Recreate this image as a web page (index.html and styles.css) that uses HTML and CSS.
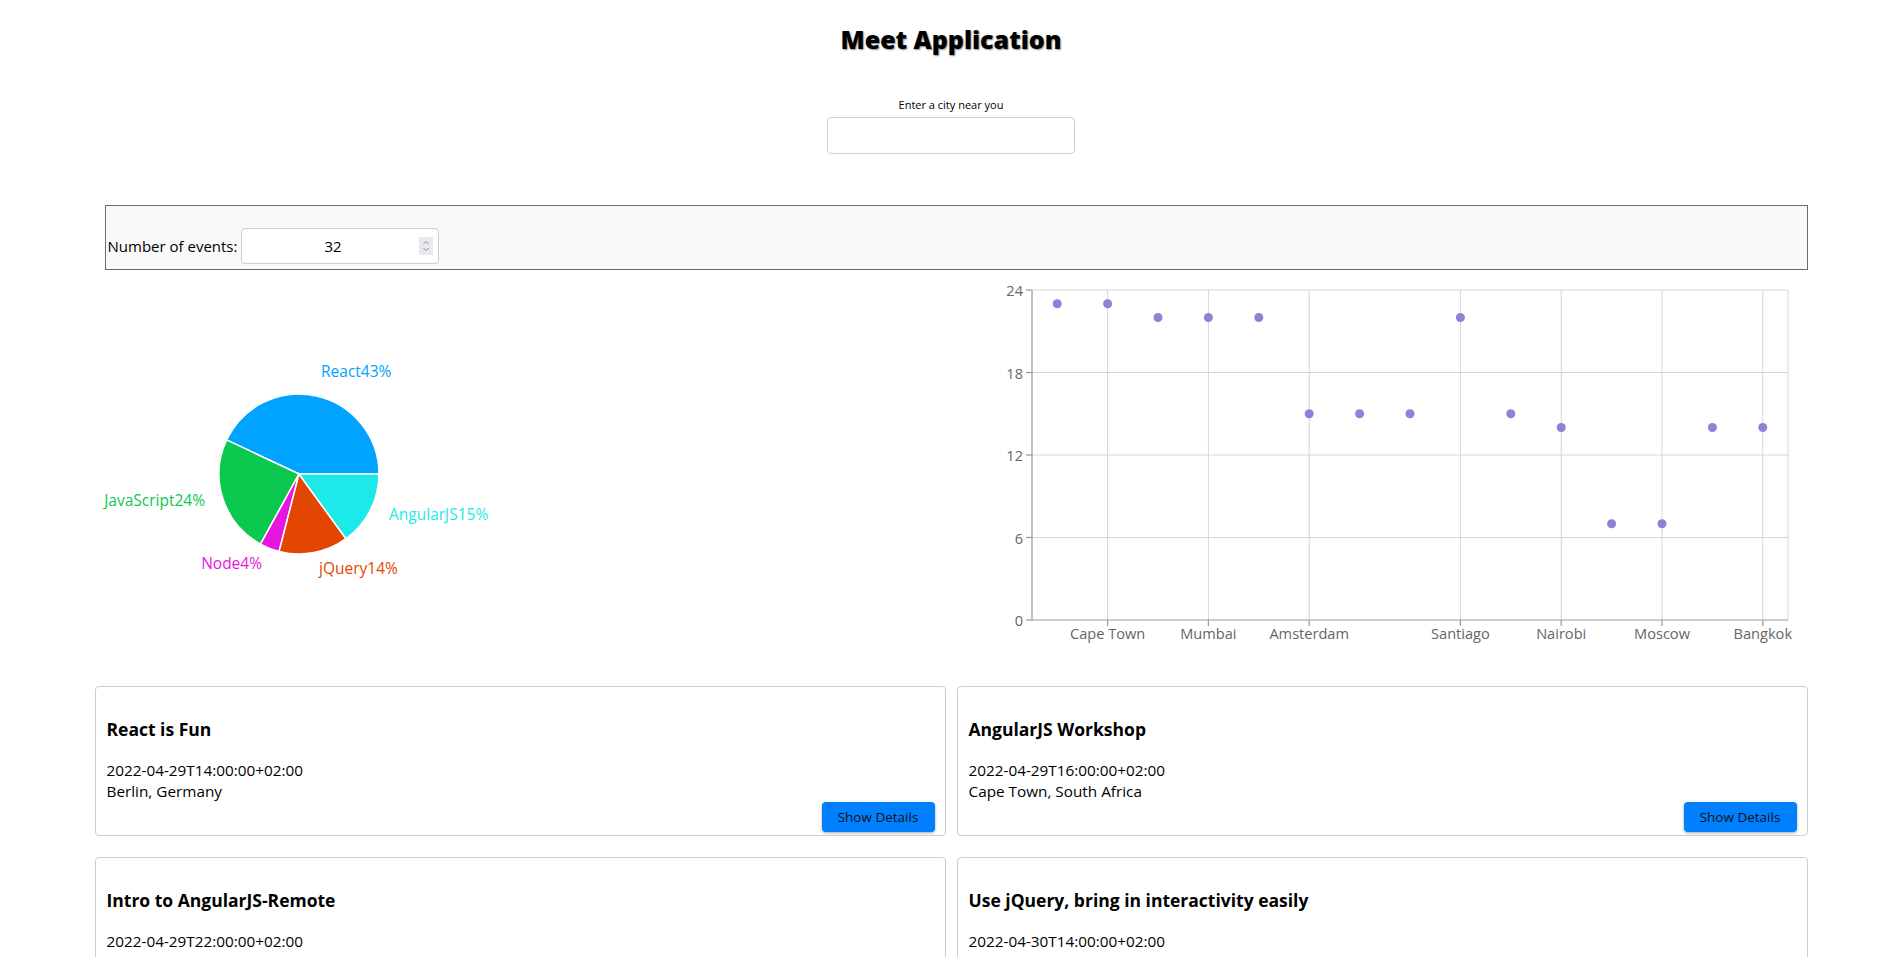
FILE: index.html
```html
<!DOCTYPE html>
<html lang="en">
<head>
<meta charset="utf-8">
<title>Meet App</title>
<link rel="stylesheet" href="styles.css">
</head>
<body>
<div class="app">
  <h1 class="title">Meet Application</h1>
  <div class="city-search">
    <label class="city-label" for="city">Enter a city near you</label>
    <input class="city-input" id="city" type="text">
  </div>
  <div class="container">
    <div class="events-bar">
      <label class="events-label" for="num">Number of events:</label>
      <div class="num-wrap">
        <input class="num-input" id="num" type="text" value="32">
        <span class="spinner">
          <svg width="14" height="18" viewBox="0 0 14 18">
            <rect x="0" y="0" width="14" height="18" fill="#e9e9ed"/>
            <path d="M4.5 7 L7 4.5 L9.5 7" fill="none" stroke="#8a8a8a" stroke-width="1"/>
            <path d="M4.5 11 L7 13.5 L9.5 11" fill="none" stroke="#8a8a8a" stroke-width="1"/>
          </svg>
        </span>
      </div>
    </div>

    <div class="charts">
      <div class="chart chart-pie">
        <svg width="856" height="400" viewBox="0 0 856 400">
          <g stroke="#fff" stroke-width="1.5">
            <path d="M204,204 L284,204 A80,80 0 0 0 131.62,169.94 Z" fill="#00a3ff"/>
            <path d="M204,204 L131.62,169.94 A80,80 0 0 0 165.46,274.10 Z" fill="#0bc94f"/>
            <path d="M204,204 L165.46,274.10 A80,80 0 0 0 184.10,281.49 Z" fill="#e516de"/>
            <path d="M204,204 L184.10,281.49 A80,80 0 0 0 251.02,268.72 Z" fill="#e34600"/>
            <path d="M204,204 L251.02,268.72 A80,80 0 0 0 284,204 Z" fill="#1ee9e9"/>
          </g>
          <g class="pie-labels">
            <text x="226" y="101" text-anchor="start" fill="#00a3ff">React43%</text>
            <text x="110" y="230" text-anchor="end" fill="#0bc94f">JavaScript24%</text>
            <text x="294" y="244" text-anchor="start" fill="#1ee9e9">AngularJS15%</text>
            <text x="167" y="293" text-anchor="end" fill="#e516de">Node4%</text>
            <text x="224" y="298" text-anchor="start" fill="#e34600">jQuery14%</text>
          </g>
        </svg>
      </div>
      <div class="chart chart-scatter">
        <svg width="857" height="400" viewBox="0 0 857 400">
          <g stroke="#d6d6d6" stroke-width="1" fill="none">
            <line x1="81" y1="20" x2="837" y2="20"/>
            <line x1="81" y1="102.5" x2="837" y2="102.5"/>
            <line x1="81" y1="185" x2="837" y2="185"/>
            <line x1="81" y1="267.5" x2="837" y2="267.5"/>
            <line x1="156.6" y1="20" x2="156.6" y2="350"/>
            <line x1="257.4" y1="20" x2="257.4" y2="350"/>
            <line x1="358.2" y1="20" x2="358.2" y2="350"/>
            <line x1="509.4" y1="20" x2="509.4" y2="350"/>
            <line x1="610.2" y1="20" x2="610.2" y2="350"/>
            <line x1="711" y1="20" x2="711" y2="350"/>
            <line x1="811.8" y1="20" x2="811.8" y2="350"/>
            <line x1="837" y1="20" x2="837" y2="350"/>
          </g>
          <g stroke="#9a9a9a" stroke-width="1.2" fill="none">
            <line x1="81" y1="20" x2="81" y2="350"/>
            <line x1="81" y1="350" x2="837" y2="350"/>
            <line x1="75" y1="20" x2="81" y2="20"/>
            <line x1="75" y1="102.5" x2="81" y2="102.5"/>
            <line x1="75" y1="185" x2="81" y2="185"/>
            <line x1="75" y1="267.5" x2="81" y2="267.5"/>
            <line x1="75" y1="350" x2="81" y2="350"/>
            <line x1="156.6" y1="350" x2="156.6" y2="356"/>
            <line x1="257.4" y1="350" x2="257.4" y2="356"/>
            <line x1="358.2" y1="350" x2="358.2" y2="356"/>
            <line x1="509.4" y1="350" x2="509.4" y2="356"/>
            <line x1="610.2" y1="350" x2="610.2" y2="356"/>
            <line x1="711" y1="350" x2="711" y2="356"/>
            <line x1="811.8" y1="350" x2="811.8" y2="356"/>
          </g>
          <g class="tick-labels">
            <text x="72" y="20" text-anchor="end">24</text>
            <text x="72" y="102.5" text-anchor="end">18</text>
            <text x="72" y="185" text-anchor="end">12</text>
            <text x="72" y="267.5" text-anchor="end">6</text>
            <text x="72" y="350" text-anchor="end">0</text>
            <text x="156.6" y="363" text-anchor="middle">Cape Town</text>
            <text x="257.4" y="363" text-anchor="middle">Mumbai</text>
            <text x="358.2" y="363" text-anchor="middle">Amsterdam</text>
            <text x="509.4" y="363" text-anchor="middle">Santiago</text>
            <text x="610.2" y="363" text-anchor="middle">Nairobi</text>
            <text x="711" y="363" text-anchor="middle">Moscow</text>
            <text x="811.8" y="363" text-anchor="middle">Bangkok</text>
          </g>
          <g fill="#8884d8">
            <circle cx="106.2" cy="33.75" r="4.5"/>
            <circle cx="156.6" cy="33.75" r="4.5"/>
            <circle cx="207" cy="47.5" r="4.5"/>
            <circle cx="257.4" cy="47.5" r="4.5"/>
            <circle cx="307.8" cy="47.5" r="4.5"/>
            <circle cx="358.2" cy="143.75" r="4.5"/>
            <circle cx="408.6" cy="143.75" r="4.5"/>
            <circle cx="459" cy="143.75" r="4.5"/>
            <circle cx="509.4" cy="47.5" r="4.5"/>
            <circle cx="559.8" cy="143.75" r="4.5"/>
            <circle cx="610.2" cy="157.5" r="4.5"/>
            <circle cx="660.6" cy="253.75" r="4.5"/>
            <circle cx="711" cy="253.75" r="4.5"/>
            <circle cx="761.4" cy="157.5" r="4.5"/>
            <circle cx="811.8" cy="157.5" r="4.5"/>
          </g>
        </svg>
      </div>
    </div>

    <ul class="event-list">
      <li class="event">
        <h3 class="event-title">React is Fun</h3>
        <p class="event-line">2022-04-29T14:00:00+02:00</p>
        <p class="event-line">Berlin, Germany</p>
        <div class="event-actions"><button class="details-btn" type="button">Show Details</button></div>
      </li>
      <li class="event">
        <h3 class="event-title">AngularJS Workshop</h3>
        <p class="event-line">2022-04-29T16:00:00+02:00</p>
        <p class="event-line">Cape Town, South Africa</p>
        <div class="event-actions"><button class="details-btn" type="button">Show Details</button></div>
      </li>
      <li class="event">
        <h3 class="event-title">Intro to AngularJS-Remote</h3>
        <p class="event-line">2022-04-29T22:00:00+02:00</p>
      </li>
      <li class="event">
        <h3 class="event-title">Use jQuery, bring in interactivity easily</h3>
        <p class="event-line">2022-04-30T14:00:00+02:00</p>
      </li>
    </ul>
  </div>
</div>
</body>
</html>
```

FILE: styles.css
```css
html, body {
  margin: 0;
  padding: 0;
  background: #fff;
}

html {
  overflow: hidden;
}

body {
  font-family: "Open Sans", "Noto Sans", sans-serif;
  color: #000;
}

.app {
  text-align: center;
}

.title {
  margin: 0;
  padding-top: 20px;
  font-size: 25px;
  line-height: 38px;
  font-weight: 800;
  color: #000;
  text-shadow: 1px 1px 1.5px rgba(0, 0, 0, 0.45);
}

.city-search {
  margin-top: 39px;
  display: flex;
  flex-direction: column;
  align-items: center;
}

.city-label {
  display: block;
  font-size: 11px;
  line-height: 16px;
}

.city-input {
  margin-top: 4px;
  width: 248px;
  height: 37px;
  box-sizing: border-box;
  border: 1px solid #cfcfcf;
  border-radius: 4px;
  background: #fff;
  font: inherit;
}

.container {
  width: 1713px;
  margin: 51px auto 0;
}

.events-bar {
  margin-left: 10px;
  box-sizing: border-box;
  height: 65px;
  border: 1px solid #6b6b6b;
  background: #f9f9f9;
  padding: 22px 0 5px 2px;
  display: flex;
  align-items: center;
  gap: 4px;
  text-align: left;
}

.events-label {
  font-size: 15px;
  line-height: 20px;
}

.num-wrap {
  position: relative;
  width: 198px;
  height: 36px;
}

.num-input {
  width: 100%;
  height: 100%;
  box-sizing: border-box;
  border: 1px solid #cfcfcf;
  border-radius: 4px;
  background: #fff;
  padding: 0 15px 0 0;
  text-align: center;
  font-family: inherit;
  font-size: 15px;
  color: #000;
}

.spinner {
  position: absolute;
  right: 6px;
  top: 9px;
  width: 14px;
  height: 18px;
  display: block;
}

.spinner svg {
  display: block;
}

.charts {
  display: grid;
  grid-template-columns: 856px 857px;
  height: 400px;
}

.chart svg {
  display: block;
}

.pie-labels text {
  font-size: 15.5px;
  dominant-baseline: central;
}

.tick-labels text {
  font-size: 14.6px;
  fill: #666;
  dominant-baseline: central;
}

.event-list {
  list-style: none;
  margin: 16px 0 0;
  padding: 0;
  display: grid;
  grid-template-columns: 1fr 1fr;
  column-gap: 11px;
  row-gap: 21px;
  text-align: left;
}

.event {
  box-sizing: border-box;
  min-height: 150px;
  border: 1px solid #cccccc;
  border-radius: 4px;
  padding: 10px 10px 3px 11px;
}

.event-title {
  margin: 20px 0 18px;
  font-size: 17.5px;
  line-height: 25px;
  font-weight: 700;
}

.event-line {
  margin: 0;
  font-size: 15.3px;
  line-height: 21px;
}

.event-actions {
  display: flex;
  justify-content: flex-end;
}

.details-btn {
  width: 113px;
  height: 30px;
  border: none;
  border-radius: 4px;
  background: #0080ff;
  color: #111;
  font-family: inherit;
  font-size: 13.5px;
  box-shadow: 0 1px 3px rgba(0, 0, 0, 0.35);
  padding: 0;
}
```
